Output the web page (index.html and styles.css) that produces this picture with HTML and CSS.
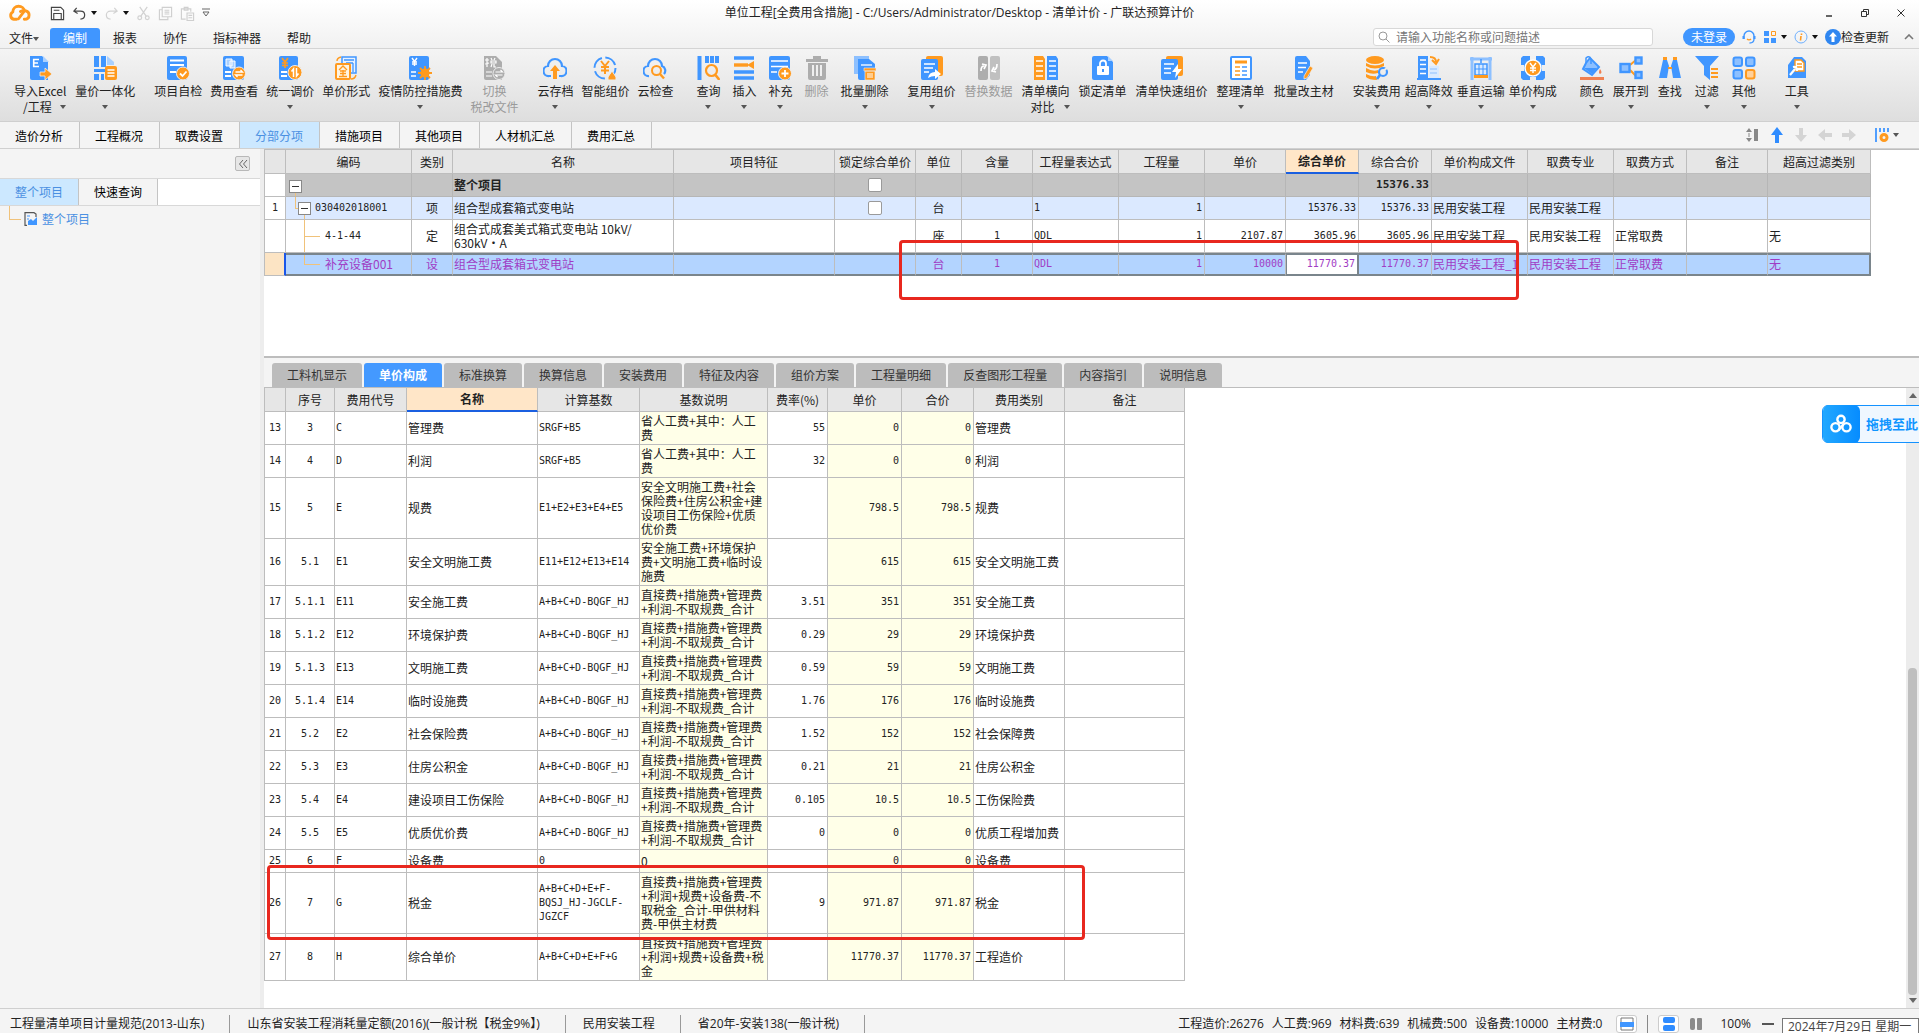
FILE: index.html
```html
<!DOCTYPE html>
<html lang="zh-CN">
<head>
    <meta charset="UTF-8" />
    <meta name="viewport" content="width=device-width, initial-scale=1.0" />
    <title>广联达预算计价</title>
    <link rel="stylesheet" href="styles.css">
</head>
<body>
<div class="app">

    <!-- Title bar + menu -->
    <header class="titlebar">
        <div class="title-row">
            <div class="quick">
                <svg class="logo" viewBox="0 0 24 18"><g fill="none" stroke="#ff9a1f" stroke-width="3" stroke-linecap="round" stroke-linejoin="round"><path d="M9 15.500H6A4 4 0 0 1 5 8C5 4 8 2 11 2s6 2 6 5l-6 8"/><path d="M13 7.500c3-2 9-1 9 3.500 0 3-2 4.500-5 4.500"/></g></svg>
                <button class="qbtn" aria-label="保存"><svg viewBox="0 0 16 16" fill="none" stroke="#444" stroke-width="1.200"><path d="M1.500 1.500h10l3 3v10h-13zM4 14V8h8v6M4 4.500h6"/></svg></button>
                <button class="qbtn" aria-label="撤销"><svg viewBox="0 0 16 16" fill="none" stroke="#444" stroke-width="1.300"><path d="M5 2L2 5.500 6 8M2.500 5.500H9c6 0 6 8 0 8.500"/></svg></button>
                <i class="caret dark"></i>
                <button class="qbtn" aria-label="重做"><svg viewBox="0 0 16 16" fill="none" stroke="#d2d2d2" stroke-width="1.300"><path d="M11 2l3 3.500L10 8M13.500 5.500H7c-6 0-6 8 0 8.500"/></svg></button>
                <i class="caret dark"></i>
                <button class="qbtn" aria-label="剪切"><svg viewBox="0 0 16 16" fill="none" stroke="#d2d2d2" stroke-width="1.300"><path d="M4 1l7 10M12 1L5 11"/><circle cx="4" cy="12.500" r="2"/><circle cx="12" cy="12.500" r="2"/></svg></button>
                <button class="qbtn" aria-label="复制"><svg viewBox="0 0 16 16" fill="none" stroke="#cfcfcf" stroke-width="1.200"><path d="M4.500 1.500h10v10h-10zM4 4H1.500v10.500h9V12M7 4.500h5M7 6.500h5M7 8.500h5"/></svg></button>
                <button class="qbtn" aria-label="粘贴"><svg viewBox="0 0 16 16" fill="none" stroke="#cfcfcf" stroke-width="1.200"><path d="M6 14H1.500V3h10v3M4.500 1.500h4v3h-4zM7.500 7.500h7v8h-7zM9 10h4M9 12.500h4"/></svg></button>
                <button class="qbtn small" aria-label="自定义"><svg viewBox="0 0 8 10"><path d="M0 1h8" stroke="#666"/><path d="M1 4h6L4 8z" fill="none" stroke="#666"/></svg></button>
            </div>
            <div class="title">单位工程[全费用含措施] - C:/Users/Administrator/Desktop - 清单计价 - 广联达预算计价</div>
            <div class="window-controls">
                <button aria-label="最小化"><svg viewBox="0 0 10 10"><path d="M2 8h6" stroke="#333" stroke-width="1.500"/></svg></button>
                <button aria-label="还原"><svg viewBox="0 0 10 10" fill="none" stroke="#333"><path d="M1.500 3.500h5v5h-5zM3.500 3V1.500h5v5H7"/></svg></button>
                <button aria-label="关闭"><svg viewBox="0 0 10 10"><path d="M1.500 1.500l7 7M8.500 1.500l-7 7" stroke="#333"/></svg></button>
            </div>
        </div>
        <div class="menu-row">
            <nav class="menu">
                <button>文件<i class="caret"></i></button>
                <button class="active">编制</button>
                <button>报表</button>
                <button>协作</button>
                <button>指标神器</button>
                <button>帮助</button>
            </nav>
            <div class="menu-right">
                <label class="search">
                    <svg viewBox="0 0 12 12" fill="none" stroke="#999"><circle cx="5" cy="5" r="4"/><path d="M8 8l3.500 3.500"/></svg>
                    <input type="text" placeholder="请输入功能名称或问题描述" aria-label="搜索功能">
                </label>
                <button class="login">未登录</button>
                <button class="mini" aria-label="客服"><svg viewBox="0 0 14 14" fill="none"><path d="M2 9V6a5 5 0 0 1 10 0v3" stroke="#4096ff" stroke-width="1.400"/><path d="M1.500 6v3M12.500 6v3" stroke="#4096ff" stroke-width="2"/><path d="M12 9c0 3-2 4-4.500 4" stroke="#4096ff" stroke-width="1.300"/><path d="M5 9c1 1 3 1 4 0" stroke="#ff9a1f" stroke-width="1.300"/></svg></button>
                <button class="mini" aria-label="应用"><svg viewBox="0 0 14 14"><path fill="#4096ff" d="M1 1h5v5H1zM1 8h5v5H1zM8 8h5v5H8z"/><path fill="none" stroke="#ff9a1f" d="M8.500 1.500h4v4h-4z"/></svg><i class="caret dark"></i></button>
                <button class="mini" aria-label="信息"><svg viewBox="0 0 14 14" fill="none"><circle cx="7" cy="7" r="6" stroke="#6eb0ff"/><path d="M7.500 3.500v1.500M7 6l-.5 4.500" stroke="#ff9a1f" stroke-width="1.600"/></svg><i class="caret dark"></i></button>
                <button class="update"><svg viewBox="0 0 16 16"><circle cx="8" cy="8" r="8" fill="#2f86f0"/><path d="M8 3l4 4.500H9.500V13h-3V7.500H4z" fill="#fff"/></svg>检查更新</button>
                <button class="fold" aria-label="收起"><svg viewBox="0 0 10 6"><path d="M1 5l4-4 4 4" fill="none" stroke="#777" stroke-width="1.600"/></svg></button>
            </div>
        </div>
    </header>

    <!-- Ribbon -->
    <div class="ribbon">
        <div class="group gap-m">
            <button class="tool">
                <svg viewBox="0 0 24 24"><path d="M2 0h12l6 6v18H4a2 2 0 0 1-2-2z" fill="#4096ff"/><path d="M15 0l6 6h-6z" fill="#a9d0ff"/><path d="M5 3.500h6M5 7h5M5 10.500h6M5.700 3v8" stroke="#fff" stroke-width="1.600"/><path d="M12 16h5v-4l7 6-7 6v-4h-5z" fill="#ff9a1f" stroke="#eee" stroke-width=".8"/></svg>
                <span>导入Excel</span><span class="second">/工程<i class="caret"></i></span>
            </button>
            <button class="tool">
                <svg viewBox="0 0 24 24"><path d="M1 0h5v11H1zM1 18h5v6H1zM8 0h5v11H8zM8 18h3v6H8z" fill="#4096ff"/><path d="M14 0l7 6v3h-7z" fill="#a9d0ff"/><path d="M1 14.500h12" stroke="#4096ff" stroke-width="3"/><rect x="12" y="10" width="12" height="14" rx="2" fill="#ff9a1f"/><path d="M14.500 14h7M14.500 17h7M14.500 20h7" stroke="#fff" stroke-width="1.300"/></svg>
                <span>量价一体化</span><span><i class="caret"></i></span>
            </button>
        </div>
        <div class="group gap-s">
            <button class="tool">
                <svg viewBox="0 0 24 24"><rect x="1" width="20" height="24" rx="2" fill="#4096ff"/><path d="M4 4.500h14M4 9h14M4 16h6" stroke="#fff" stroke-width="1.800"/><circle cx="17" cy="17.500" r="6.500" fill="#ff9a1f" stroke="#eee"/><path d="M14 17.500l2.500 2.500 4-4.500" fill="none" stroke="#fff" stroke-width="1.800"/></svg>
                <span>项目自检</span>
            </button>
            <button class="tool">
                <svg viewBox="0 0 24 24"><rect x="1" width="21" height="24" rx="2" fill="#4096ff"/><path d="M4 3h6v7H4zM8 5h5v7H8z" fill="#a9d0ff" stroke="#fff"/><path d="M3 16h6M3 20h6" stroke="#fff" stroke-width="1.800"/><circle cx="17" cy="17.500" r="6.500" fill="#ff9a1f" stroke="#eee"/><path d="M13.500 16h7l-2-2M20.500 19h-7l2 2" fill="none" stroke="#fff" stroke-width="1.300"/></svg>
                <span>费用查看</span>
            </button>
            <button class="tool">
                <svg viewBox="0 0 24 24"><rect x="1" width="19" height="24" rx="2" fill="#4096ff"/><path d="M4 2l3 4 3-4M7 6v6M4 7h6M4 9.500h6" fill="none" stroke="#ff9a1f" stroke-width="1.700"/><path d="M3 16h6M3 20h6" stroke="#fff" stroke-width="1.800"/><circle cx="17" cy="16.500" r="7" fill="#ff9a1f" stroke="#eee"/><path d="M15.500 21v-8l-2 2.500M18.500 12v8l2-2.500" fill="none" stroke="#fff" stroke-width="1.500"/></svg>
                <span>统一调价</span><span><i class="caret"></i></span>
            </button>
            <button class="tool">
                <svg viewBox="0 0 24 24"><rect x="8" y="1" width="14" height="16" fill="#e8f2ff" stroke="#4096ff" stroke-width="1.500"/><path d="M10 4h10M12 7h7M19 7v9" stroke="#4096ff" stroke-width="1.300"/><path d="M3 5q0-3 4-4M17 23q4 0 5-4" fill="none" stroke="#ff9a1f" stroke-width="1.400"/><rect x="2" y="8" width="14" height="15" rx="1" fill="#fff4e0" stroke="#ff9a1f" stroke-width="2"/><path d="M5 14l4-4 4 4M6 15h6M6 17.500h6M5 20.500h8M9 14v6" fill="none" stroke="#ff9a1f" stroke-width="1.300"/></svg>
                <span>单价形式</span>
            </button>
            <button class="tool">
                <svg viewBox="0 0 24 24"><rect x="1" width="20" height="24" rx="2" fill="#4096ff"/><path d="M4 2l2.500 3.500L9 2M6.500 5.500V10M4 6h5M4 8h5M3 16h5M3 20h5" fill="none" stroke="#fff" stroke-width="1.400"/><path d="M17 10v14M10 17h14M12 12l10 10M22 12L12 22" stroke="#ff9a1f" stroke-width="1.800"/><circle cx="17" cy="17" r="4.500" fill="#ff9a1f"/></svg>
                <span>疫情防控措施费</span><span><i class="caret"></i></span>
            </button>
            <button class="tool" disabled>
                <svg viewBox="0 0 24 24"><path d="M2 0h12l6 6v18H4a2 2 0 0 1-2-2z" fill="#adadad"/><path d="M3 4h4M5 2v9M3 8l4-1M9 2l1 2M13 2l-1 2M9 5h5v2H9zM10 8l-1 3M12 8v3h2M4 16h6M4 20h6" fill="none" stroke="#fff" stroke-width="1.200"/><circle cx="17" cy="17.500" r="6" fill="#adadad" stroke="#eee"/><path d="M13.500 16h7l-2-2M20.500 19h-7l2 2" fill="none" stroke="#fff" stroke-width="1.200"/></svg>
                <span>切换</span><span>税改文件</span>
            </button>
        </div>
        <div class="group gap-s">
            <button class="tool">
                <svg viewBox="0 0 24 24" fill="none"><path d="M8 20H6a5 5 0 0 1-1-10 7 7 0 0 1 14 0 5 5 0 0 1-1 10h-2" stroke="#4096ff" stroke-width="2.200"/><path d="M12 9l5 6h-3v8h-4v-8H7z" fill="#ff9a1f"/></svg>
                <span>云存档</span><span><i class="caret"></i></span>
            </button>
            <button class="tool">
                <svg viewBox="0 0 24 24" fill="none"><circle cx="12" cy="12" r="10.500" stroke="#4096ff" stroke-width="2" stroke-dasharray="13 3.500"/><path d="M8 5l4 5 4-5M12 10v8M8 11h8M8 14.500h8" stroke="#ff9a1f" stroke-width="2"/><path d="M15 24v-3l4-6 4 6v3z" fill="#ff9a1f" stroke="#eee"/></svg>
                <span>智能组价</span>
            </button>
            <button class="tool">
                <svg viewBox="0 0 24 24" fill="none"><path d="M6 20a5 5 0 0 1-1-10 7 7 0 0 1 14 0 5 5 0 0 1 2 8" stroke="#4096ff" stroke-width="2.200"/><circle cx="13.500" cy="14.500" r="4.500" stroke="#ff9a1f" stroke-width="2"/><path d="M17 18l4 4.500" stroke="#ff9a1f" stroke-width="2.400"/></svg>
                <span>云检查</span>
            </button>
        </div>
        <div class="group gap-l wide">
            <button class="tool">
                <svg viewBox="0 0 24 24" fill="none"><path d="M3.500 0v24M11 0v7M16 0v7M21 0v7" stroke="#4096ff" stroke-width="4"/><circle cx="15.500" cy="14.500" r="5.500" stroke="#ff9a1f" stroke-width="2.200"/><path d="M19.500 19l4 5" stroke="#ff9a1f" stroke-width="2.600"/></svg>
                <span>查询</span><span><i class="caret"></i></span>
            </button>
            <button class="tool">
                <svg viewBox="0 0 24 24" fill="none"><path d="M2 2h20M2 16h20M2 22h20" stroke="#4096ff" stroke-width="3.600"/><path d="M2 9h14" stroke="#ff9a1f" stroke-width="3.400"/><path d="M15 9l7-4v8z" fill="#ff9a1f"/></svg>
                <span>插入</span><span><i class="caret"></i></span>
            </button>
            <button class="tool">
                <svg viewBox="0 0 24 24"><rect x="1" width="21" height="24" rx="2" fill="#4096ff"/><path d="M3 5h17M3 10.500h17M3 16h6" stroke="#fff" stroke-width="1.600"/><circle cx="17" cy="17.500" r="6.500" fill="#ff9a1f" stroke="#eee"/><path d="M17 14v7M13.500 17.500h7" stroke="#fff" stroke-width="1.800"/></svg>
                <span>补充</span><span><i class="caret"></i></span>
            </button>
            <button class="tool" disabled>
                <svg viewBox="0 0 24 24"><path d="M1 3h22v3H1zM8 0h8v3H8zM3 7h18v15a2 2 0 0 1-2 2H5a2 2 0 0 1-2-2z" fill="#adadad"/><path d="M8 9v11M12 9v11M16 9v11" stroke="#fff" stroke-width="1.600"/></svg>
                <span>删除</span>
            </button>
            <button class="tool">
                <svg viewBox="0 0 24 24"><path d="M1 0h15v18H1z" fill="#8dc0ff"/><path d="M5 3h11l6 5v16H7a2 2 0 0 1-2-2z" fill="#4096ff"/><path d="M8 9h11" stroke="#fff" stroke-width="1.300"/><path d="M11 12h12v3H11zM12 15h10v9H12z" fill="#ff9a1f" stroke="#eee" stroke-width=".6"/><path d="M15 17v5M17 17v5M19 17v5" stroke="#fff"/></svg>
                <span>批量删除</span><span><i class="caret"></i></span>
            </button>
        </div>
        <div class="group gap-m">
            <button class="tool">
                <svg viewBox="0 0 24 24"><rect x="6" width="17" height="20" rx="2" fill="#ff9a1f"/><rect x="1" y="3" width="17" height="21" rx="2" fill="#4096ff"/><path d="M4 8h11M4 12h9M4 16h5" stroke="#fff" stroke-width="1.600"/><path d="M8 22q1-6 7-6v-3l6 5-6 5v-3q-4 0-7 2z" fill="#fff"/></svg>
                <span>复用组价</span><span><i class="caret"></i></span>
            </button>
            <button class="tool" disabled>
                <svg viewBox="0 0 24 24"><rect x="1" width="10" height="24" rx="2" fill="#adadad"/><rect x="13" width="10" height="24" rx="2" fill="#c0c0c0"/><path d="M4 15q0-5 3-5M5 8l4 1-2 4M20 8q0 5-3 6M19 16l-4-1 2-4" fill="none" stroke="#fff" stroke-width="1.700"/></svg>
                <span>替换数据</span>
            </button>
            <button class="tool">
                <svg viewBox="0 0 24 24"><path d="M0 0h9l2 3v21H0z" fill="#ff9a1f"/><path d="M13 0h9l2 3v21H13z" fill="#4096ff"/><path d="M2 5h7M2 10h7M2 15h7M2 20h7M15 5h7M15 10h7M15 15h7M15 20h7" stroke="#fff" stroke-width="1.500"/></svg>
                <span>清单横向</span><span class="second">对比<i class="caret"></i></span>
            </button>
            <button class="tool">
                <svg viewBox="0 0 24 24"><path d="M3 0h13l6 6v18H3a2 2 0 0 1-2-2V2a2 2 0 0 1 2-2z" fill="#4096ff"/><path d="M17 0l5 5h-5z" fill="#a9d0ff"/><rect x="6" y="10" width="12" height="9" rx="1" fill="#fff"/><path d="M9 10V7.500a3 3 0 0 1 6 0V10" fill="none" stroke="#fff" stroke-width="1.800"/><path d="M12 13v3" stroke="#4096ff" stroke-width="2"/></svg>
                <span>锁定清单</span>
            </button>
            <button class="tool">
                <svg viewBox="0 0 24 24"><rect x="6" width="17" height="20" rx="2" fill="#ff9a1f"/><rect x="1" y="3" width="17" height="21" rx="2" fill="#4096ff"/><path d="M4 8h10M4 12.500h7M4 17h7" stroke="#fff" stroke-width="1.600"/><path d="M18 8l-6 8h4l-1 6 7-9h-4z" fill="#fff"/></svg>
                <span>清单快速组价</span>
            </button>
            <button class="tool">
                <svg viewBox="0 0 24 24"><rect x="2" y="1" width="20" height="22" rx="1" fill="#fff" stroke="#4096ff" stroke-width="2"/><path d="M6 6h12" stroke="#ff9a1f" stroke-width="3"/><path d="M6 11h5M6 15h5M6 19h5" stroke="#ff9a1f" stroke-width="1.700"/><path d="M13 11h5M13 15h5M13 19h5" stroke="#4096ff" stroke-width="1.700"/></svg>
                <span>整理清单</span><span><i class="caret"></i></span>
            </button>
            <button class="tool">
                <svg viewBox="0 0 24 24"><path d="M5 0h9l4 5v14l-4 5H5a2 2 0 0 1-2-2V2a2 2 0 0 1 2-2z" fill="#4096ff"/><path d="M6 7h9M6 11.500h8M6 16h5" stroke="#fff" stroke-width="1.600"/><path d="M18 10l3 2-6 10-3 1v-3z" fill="#ff9a1f" stroke="#eee" stroke-width=".7"/></svg>
                <span>批量改主材</span>
            </button>
        </div>
        <div class="group gap-xs">
            <button class="tool">
                <svg viewBox="0 0 24 24"><g fill="#ff9a1f"><ellipse cx="10" cy="4" rx="9" ry="4"/><path d="M1 7q9 5 18 0v3q-9 5-18 0zM1 12q7 4 12 2v3q-6 2-12-1zM1 18q6 3 10 2l1 4Q4 24 1 21z"/></g><circle cx="18" cy="16" r="4" fill="none" stroke="#4096ff" stroke-width="2.200"/><path d="M15 19l-3 4" stroke="#4096ff" stroke-width="2.600"/><path d="M18 15l4-3" stroke="#eee" stroke-width="2"/></svg>
                <span>安装费用</span><span><i class="caret"></i></span>
            </button>
            <button class="tool">
                <svg viewBox="0 0 24 24"><path d="M1 0h10v24H1z" fill="#4096ff"/><path d="M3 4h6M3 8.500h6M3 13h6M3 17.500h6" stroke="#fff" stroke-width="1.600"/><path d="M12 10h10v13H12z" fill="#d9eaff"/><path d="M13 13h7M13 17h7" stroke="#8dc0ff"/><path d="M0 23h24" stroke="#4096ff" stroke-width="2"/><path d="M13 1q6 0 6 5M15 4l4 4 3-5" fill="none" stroke="#ff9a1f" stroke-width="2"/></svg>
                <span>超高降效</span><span><i class="caret"></i></span>
            </button>
            <button class="tool">
                <svg viewBox="0 0 24 24"><path d="M3 1v23M21 1v23M1 3h22" stroke="#8dc0ff" stroke-width="3"/><path d="M12 3v4M6 8h12v11H6z" fill="#d9eaff" stroke="#4096ff" stroke-width="1.500"/><path d="M10 8v11M14 8v11M6 13h12" stroke="#4096ff"/><path d="M5 19h14v3H5z" fill="#ff9a1f"/></svg>
                <span>垂直运输</span><span><i class="caret"></i></span>
            </button>
            <button class="tool">
                <svg viewBox="0 0 24 24"><path d="M2 0h7v4h6V0h7l2 2v7h-3v6h3v7l-2 2h-7v-3H9v3H2l-2-2v-7h3V9H0V2z" fill="#4096ff"/><circle cx="12" cy="12" r="8" fill="#ff9a1f" stroke="#fff" stroke-width="1.500"/><path d="M9 7l3 4 3-4M12 11v6M9 12h6M9 14.500h6" fill="none" stroke="#fff" stroke-width="1.400"/></svg>
                <span>单价构成</span><span><i class="caret"></i></span>
            </button>
        </div>
        <div class="group gap-m wide">
            <button class="tool">
                <svg viewBox="0 0 24 24"><path d="M6 7l4-5 9 9-7 8-9-6z" fill="#8dc0ff" stroke="#4096ff" stroke-width="2"/><path d="M4 12h13l-5 6z" fill="#4096ff"/><path d="M6 7V2q3-3 5 1v5" fill="none" stroke="#4096ff" stroke-width="1.500"/><path d="M20 13q3 4 0 5-2-1 0-5zM0 21h24v3H0z" fill="#f08050"/></svg>
                <span>颜色</span><span><i class="caret"></i></span>
            </button>
            <button class="tool">
                <svg viewBox="0 0 24 24"><path d="M11 9l6-5M11 14l6 6" stroke="#ff9a1f" stroke-width="2"/><g fill="#8dc0ff" stroke="#4096ff" stroke-width="2.400"><rect x="1.500" y="8" width="9" height="8"/><rect x="16.500" y="1.500" width="6" height="6"/><rect x="16.500" y="16" width="6" height="6"/></g></svg>
                <span>展开到</span><span><i class="caret"></i></span>
            </button>
            <button class="tool">
                <svg viewBox="0 0 24 24"><path d="M5 4h4l2 6-2 12H1zM15 4h4l4 18h-8l-2-12z" fill="#4096ff"/><path d="M5 1h4v3H5zM15 1h4v3h-4zM10 11h4v2h-4z" fill="#ff9a1f"/></svg>
                <span>查找</span>
            </button>
            <button class="tool spaced">
                <svg viewBox="0 0 24 24"><path d="M0 0h24l-9 10v14l-6-5v-9z" fill="#4096ff"/><path d="M16 13h7M16 17h7M16 21h7" stroke="#ff9a1f" stroke-width="2"/></svg>
                <span>过滤</span><span><i class="caret"></i></span>
            </button>
            <button class="tool spaced">
                <svg viewBox="0 0 24 24" fill="#8dc0ff" stroke="#4096ff" stroke-width="2"><rect x="1.500" y="1.500" width="8.500" height="8.500" rx="2"/><rect x="14" y="1.500" width="8.500" height="8.500" rx="2"/><rect x="1.500" y="14" width="8.500" height="8.500" rx="2"/><rect x="14" y="14" width="8.500" height="8.500" rx="2" fill="#ffd09a" stroke="#ff9a1f"/></svg>
                <span>其他</span><span><i class="caret"></i></span>
            </button>
        </div>
        <div class="group far">
            <button class="tool">
                <svg viewBox="0 0 24 24"><path d="M9 1h8l4 4v17H3V9z" fill="#4096ff"/><path d="M10 4h6l3 3v8h-9z" fill="#fff" stroke="#ff9a1f" stroke-width="1.400"/><path d="M12 8h5M12 11h5" stroke="#ff9a1f" stroke-width="1.300"/><path d="M5 19l5-6M8 11q4-1 4 4" fill="none" stroke="#fff" stroke-width="2.200"/></svg>
                <span>工具</span><span><i class="caret"></i></span>
            </button>
        </div>
    </div>

    <!-- Module tabs -->
    <div class="module-bar">
        <nav class="module-tabs">
            <button>造价分析</button>
            <button>工程概况</button>
            <button>取费设置</button>
            <button class="active">分部分项</button>
            <button>措施项目</button>
            <button>其他项目</button>
            <button>人材机汇总</button>
            <button>费用汇总</button>
        </nav>
        <div class="module-actions">
            <button aria-label="行高"><svg viewBox="0 0 16 16"><path d="M1 5l3-4 3 4zM1 11l3 4 3-4z" fill="#888"/><path d="M4 6v4" stroke="#888"/><path d="M9 2h4v12H9z" fill="#888"/></svg></button>
            <button aria-label="上移"><svg viewBox="0 0 16 16"><path d="M8 0l6 8h-4v8H6V8H2z" fill="#2f8cff"/></svg></button>
            <button aria-label="下移"><svg viewBox="0 0 16 16"><path d="M8 15l6-7h-4V1H6v7H2z" fill="#d4d4d4"/></svg></button>
            <button aria-label="左移"><svg viewBox="0 0 16 16"><path d="M1 8l7-6v4h7v4H8v4z" fill="#d4d4d4"/></svg></button>
            <button aria-label="右移"><svg viewBox="0 0 16 16"><path d="M15 8L8 2v4H1v4h7v4z" fill="#d4d4d4"/></svg></button>
            <button class="setting" aria-label="列设置"><svg viewBox="0 0 16 16"><path d="M2 1v14M6 1v4M10 1v4M14 1v4" stroke="#4096ff" stroke-width="1.800"/><circle cx="10" cy="10.500" r="3" fill="none" stroke="#ff9a1f" stroke-width="3"/></svg><i class="caret"></i></button>
        </div>
    </div>

    <div class="workspace">
        <!-- Project tree -->
        <aside class="sidebar">
            <div class="side-head"><button class="collapse" aria-label="折叠"><svg viewBox="0 0 10 10"><path d="M5 1L1.500 5 5 9M9 1L5.500 5 9 9" fill="none" stroke="#666"/></svg></button></div>
            <div class="side-tabs">
                <button class="active">整个项目</button>
                <button>快速查询</button>
            </div>
            <div class="tree">
                <a href="#project" class="tree-node">
                    <svg viewBox="0 0 14 14" fill="none"><path d="M12 5V2L10 .7H1v12.600h2" stroke="#555" stroke-width="1.200"/><path d="M3 4h3M3 7h2" stroke="#4096ff"/><path d="M4 13V9l3-2 2 2 4-4v8z" fill="#4096ff"/></svg>
                    整个项目
                </a>
            </div>
        </aside>

        <main class="content">
            <!-- Bill of quantities -->
            <section class="bill-pane">
                <table class="grid bill">
                    <colgroup>
                        <col class="w-no"><col class="w-code"><col class="w-kind"><col class="w-name"><col class="w-feature"><col class="w-lock"><col class="w-unit"><col class="w-content"><col class="w-expr"><col class="w-qty"><col class="w-price"><col class="w-total"><col class="w-total"><col class="w-file"><col class="w-major"><col class="w-mode"><col class="w-note"><col class="w-filter">
                    </colgroup>
                    <thead>
                        <tr><th></th><th>编码</th><th>类别</th><th>名称</th><th>项目特征</th><th>锁定综合单价</th><th>单位</th><th>含量</th><th>工程量表达式</th><th>工程量</th><th>单价</th><th class="current">综合单价</th><th>综合合价</th><th>单价构成文件</th><th>取费专业</th><th>取费方式</th><th>备注</th><th>超高过滤类别</th></tr>
                    </thead>
                    <tbody>
                        <tr class="total">
                            <td class="no"></td><td class="lv0"><button class="toggle" aria-label="折叠"></button></td><td></td><td>整个项目</td><td></td><td class="c"><input type="checkbox" aria-label="锁定综合单价"></td><td></td><td></td><td></td><td></td><td></td><td></td><td class="num">15376.33</td><td></td><td></td><td></td><td></td><td></td>
                        </tr>
                        <tr class="item">
                            <td class="no">1</td><td class="lv1 mono"><button class="toggle" aria-label="折叠"></button>030402018001</td><td class="c">项</td><td>组合型成套箱式变电站</td><td></td><td class="c"><input type="checkbox" aria-label="锁定综合单价"></td><td class="c">台</td><td></td><td class="mono">1</td><td class="num">1</td><td></td><td class="num">15376.33</td><td class="num">15376.33</td><td>民用安装工程</td><td>民用安装工程</td><td></td><td></td><td></td>
                        </tr>
                        <tr>
                            <td class="no"></td><td class="lv2 mono">4-1-44</td><td class="c">定</td><td>组合式成套美式箱式变电站 10kV/<br>630kV·A</td><td></td><td></td><td class="c">座</td><td class="mono c">1</td><td class="mono">QDL</td><td class="num">1</td><td class="num">2107.87</td><td class="num">3605.96</td><td class="num">3605.96</td><td>民用安装工程</td><td>民用安装工程</td><td>正常取费</td><td></td><td>无</td>
                        </tr>
                        <tr class="selected">
                            <td class="no"></td><td class="lv2 last">补充设备001</td><td class="c">设</td><td>组合型成套箱式变电站</td><td></td><td></td><td class="c">台</td><td class="mono c">1</td><td class="mono">QDL</td><td class="num">1</td><td class="num">10000</td><td class="num editing">11770.37</td><td class="num">11770.37</td><td>民用安装工程_1</td><td>民用安装工程</td><td>正常取费</td><td></td><td>无</td>
                        </tr>
                    </tbody>
                </table>
                <div class="mark mark-price"></div>
            </section>

            <!-- Detail tabs -->
            <nav class="detail-tabs">
                <button>工料机显示</button>
                <button class="active">单价构成</button>
                <button>标准换算</button>
                <button>换算信息</button>
                <button>安装费用</button>
                <button>特征及内容</button>
                <button>组价方案</button>
                <button>工程量明细</button>
                <button>反查图形工程量</button>
                <button>内容指引</button>
                <button>说明信息</button>
            </nav>

            <section class="detail-pane">
                <div class="detail-body">
                    <table class="grid detail">
                        <colgroup>
                            <col class="w-no"><col class="w-seq"><col class="w-sym"><col class="w-fee"><col class="w-base"><col class="w-desc"><col class="w-rate"><col class="w-unitprice"><col class="w-sum"><col class="w-type"><col class="w-remark">
                        </colgroup>
                        <thead>
                            <tr><th></th><th>序号</th><th>费用代号</th><th class="current">名称</th><th>计算基数</th><th>基数说明</th><th>费率(%)</th><th>单价</th><th>合价</th><th>费用类别</th><th>备注</th></tr>
                        </thead>
                        <tbody>
                            <tr><td>13</td><td>3</td><td>C</td><td>管理费</td><td>SRGF+B5</td><td>省人工费+其中：人工费</td><td>55</td><td>0</td><td>0</td><td>管理费</td><td></td></tr>
                            <tr><td>14</td><td>4</td><td>D</td><td>利润</td><td>SRGF+B5</td><td>省人工费+其中：人工费</td><td>32</td><td>0</td><td>0</td><td>利润</td><td></td></tr>
                            <tr><td>15</td><td>5</td><td>E</td><td>规费</td><td>E1+E2+E3+E4+E5</td><td>安全文明施工费+社会保险费+住房公积金+建设项目工伤保险+优质优价费</td><td></td><td>798.5</td><td>798.5</td><td>规费</td><td></td></tr>
                            <tr><td>16</td><td>5.1</td><td>E1</td><td>安全文明施工费</td><td>E11+E12+E13+E14</td><td>安全施工费+环境保护费+文明施工费+临时设施费</td><td></td><td>615</td><td>615</td><td>安全文明施工费</td><td></td></tr>
                            <tr><td>17</td><td>5.1.1</td><td>E11</td><td>安全施工费</td><td>A+B+C+D-BQGF_HJ</td><td>直接费+措施费+管理费+利润-不取规费_合计</td><td>3.51</td><td>351</td><td>351</td><td>安全施工费</td><td></td></tr>
                            <tr><td>18</td><td>5.1.2</td><td>E12</td><td>环境保护费</td><td>A+B+C+D-BQGF_HJ</td><td>直接费+措施费+管理费+利润-不取规费_合计</td><td>0.29</td><td>29</td><td>29</td><td>环境保护费</td><td></td></tr>
                            <tr><td>19</td><td>5.1.3</td><td>E13</td><td>文明施工费</td><td>A+B+C+D-BQGF_HJ</td><td>直接费+措施费+管理费+利润-不取规费_合计</td><td>0.59</td><td>59</td><td>59</td><td>文明施工费</td><td></td></tr>
                            <tr><td>20</td><td>5.1.4</td><td>E14</td><td>临时设施费</td><td>A+B+C+D-BQGF_HJ</td><td>直接费+措施费+管理费+利润-不取规费_合计</td><td>1.76</td><td>176</td><td>176</td><td>临时设施费</td><td></td></tr>
                            <tr><td>21</td><td>5.2</td><td>E2</td><td>社会保险费</td><td>A+B+C+D-BQGF_HJ</td><td>直接费+措施费+管理费+利润-不取规费_合计</td><td>1.52</td><td>152</td><td>152</td><td>社会保障费</td><td></td></tr>
                            <tr><td>22</td><td>5.3</td><td>E3</td><td>住房公积金</td><td>A+B+C+D-BQGF_HJ</td><td>直接费+措施费+管理费+利润-不取规费_合计</td><td>0.21</td><td>21</td><td>21</td><td>住房公积金</td><td></td></tr>
                            <tr><td>23</td><td>5.4</td><td>E4</td><td>建设项目工伤保险</td><td>A+B+C+D-BQGF_HJ</td><td>直接费+措施费+管理费+利润-不取规费_合计</td><td>0.105</td><td>10.5</td><td>10.5</td><td>工伤保险费</td><td></td></tr>
                            <tr><td>24</td><td>5.5</td><td>E5</td><td>优质优价费</td><td>A+B+C+D-BQGF_HJ</td><td>直接费+措施费+管理费+利润-不取规费_合计</td><td>0</td><td>0</td><td>0</td><td>优质工程增加费</td><td></td></tr>
                            <tr><td>25</td><td>6</td><td>F</td><td>设备费</td><td>0</td><td>0</td><td></td><td>0</td><td>0</td><td>设备费</td><td></td></tr>
                            <tr><td>26</td><td>7</td><td>G</td><td>税金</td><td>A+B+C+D+E+F-BQSJ_HJ-JGCLF-JGZCF</td><td>直接费+措施费+管理费+利润+规费+设备费-不取税金_合计-甲供材料费-甲供主材费</td><td>9</td><td>971.87</td><td>971.87</td><td>税金</td><td></td></tr>
                            <tr><td>27</td><td>8</td><td>H</td><td>综合单价</td><td>A+B+C+D+E+F+G</td><td>直接费+措施费+管理费+利润+规费+设备费+税金</td><td></td><td>11770.37</td><td>11770.37</td><td>工程造价</td><td></td></tr>
                        </tbody>
                    </table>
                </div>
                <div class="scrollbar"><i class="arrow up"></i><div class="track"><div class="thumb"></div></div><i class="arrow"></i></div>
                <div class="mark mark-tax"></div>
                <button class="cloud-drop">
                    <span class="cloud-icon"><svg viewBox="0 0 24 24" fill="none" stroke="#fff" stroke-width="2.600"><circle cx="12" cy="7" r="4"/><circle cx="6" cy="15.500" r="4.500"/><circle cx="18" cy="15.500" r="4.500"/><path d="M9 19l6-7"/></svg></span>
                    <span class="cloud-text">拖拽至此</span>
                </button>
            </section>
        </main>
    </div>

    <!-- Status bar -->
    <footer class="status">
        <span class="cell">工程量清单项目计量规范(2013-山东)</span>
        <span class="cell">山东省安装工程消耗量定额(2016)(一般计税【税金9%】)</span>
        <span class="cell">民用安装工程</span>
        <span class="cell">省20年-安装138(一般计税)</span>
        <div class="summary"><span>工程造价:26276</span><span>人工费:969</span><span>材料费:639</span><span>机械费:500</span><span>设备费:10000</span><span>主材费:0</span></div>
        <button class="view" aria-label="单窗"><svg viewBox="0 0 14 14"><path d="M1 1h12v12H1z" fill="#fff" stroke="#777"/><path d="M0 5h14v5H0z" fill="#4096ff"/></svg></button>
        <i class="sep"></i>
        <button class="view" aria-label="上下布局"><svg viewBox="0 0 14 14" fill="#2f8cff"><rect x="1" width="12" height="6" rx="2"/><rect x="1" y="8" width="12" height="6" rx="2"/></svg></button>
        <button class="view plain" aria-label="左右布局"><svg viewBox="0 0 14 14" fill="#8a8a8a"><rect x="1" y="1" width="5" height="12" rx="2"/><rect x="8" y="1" width="5" height="12" rx="1"/></svg></button>
        <span class="zoom">100%</span>
        <button class="minus" aria-label="缩小"></button>
        <div class="date-tip">2024年7月29日 星期一</div>
    </footer>
</div>
</body>
</html>
```
FILE: styles.css
```css
:root {
    --blue: #4096ff;
    --orange: #ff9a1f;
    --line: #bdbdbd;
    --panel: #f4f4f4;
    --active: #cce8ff;
    --link: #4a90e2;
    --red: #e8281f;
    --tree: #f0c27a;
}

* {
    box-sizing: border-box;
}

body {
    margin: 0;
    font-family: "Noto Sans CJK SC", sans-serif;
    font-size: 12px;
    line-height: 16px;
    color: #222;
    background: #fff;
    overflow: hidden;
}

button {
    font: inherit;
    color: inherit;
    background: none;
    border: none;
    padding: 0;
    white-space: nowrap;
}

svg {
    display: block;
    flex: none;
}

.app {
    display: flex;
    flex-direction: column;
    height: 100vh;
}

.caret {
    display: inline-block;
    border: 3px solid transparent;
    border-top: 4px solid #555;
    border-bottom: 0;
}

.caret.dark {
    border-top-color: #111;
}

/* Title bar */
.titlebar {
    background: linear-gradient(#ffffff, #f1f1f1);
    border-bottom: 1px solid #d4d4d4;
}

.title-row {
    display: grid;
    grid-template-columns: 1fr auto 1fr;
    align-items: center;
    height: 26px;
}

.title,
.status {
    font-family: "Open Sans", "Noto Sans CJK SC", sans-serif;
}

.quick {
    display: flex;
    align-items: center;
    gap: 7px;
    padding-left: 8px;
}

.quick .caret {
    margin-left: -3px;
}

.logo {
    width: 23px;
    height: 18px;
    margin-right: 12px;
}

.qbtn svg {
    width: 15px;
    height: 15px;
}

.qbtn.small svg {
    width: 8px;
    height: 10px;
}

.window-controls {
    display: flex;
    justify-content: flex-end;
    gap: 26px;
    padding-right: 13px;
}

.window-controls svg {
    width: 10px;
    height: 10px;
}

.menu-row {
    display: flex;
    justify-content: space-between;
    height: 22px;
}

.menu {
    display: flex;
    align-items: flex-end;
}

.menu button {
    height: 20px;
    padding: 0 13px;
}

.menu button:first-child {
    width: 50px;
    padding: 0 0 0 9px;
    text-align: left;
}

.menu .caret {
    margin: 0 0 2px 0;
}

.menu .active {
    color: #fff;
    background: var(--blue);
    border-radius: 3px 3px 0 0;
}

.menu-right {
    display: flex;
    align-items: center;
    gap: 7px;
    padding-right: 5px;
}

.search {
    display: flex;
    align-items: center;
    gap: 6px;
    width: 280px;
    height: 18px;
    padding: 0 4px;
    margin-right: 23px;
    background: #fff;
    border: 1px solid #d8d8d8;
    border-radius: 3px;
}

.search svg {
    width: 12px;
    height: 12px;
}

.search input {
    flex: 1;
    min-width: 0;
    padding: 0;
    font: inherit;
    border: none;
    outline: none;
    background: none;
}

.search input::placeholder {
    color: #777;
}

.login {
    height: 18px;
    padding: 0 8px;
    color: #fff;
    background: var(--blue);
    border-radius: 9px;
}

.mini {
    display: flex;
    align-items: center;
    gap: 4px;
}

.mini svg {
    width: 14px;
    height: 14px;
}

.update {
    display: flex;
    align-items: center;
}

.update svg {
    width: 16px;
    height: 16px;
}

.fold {
    margin-left: 8px;
}

.fold svg {
    width: 10px;
    height: 6px;
}

/* Ribbon */
.ribbon {
    display: flex;
    gap: 19px;
    height: 73px;
    padding: 7px 14px 0;
    background: linear-gradient(#f4f4f4, #dedede);
    border-bottom: 1px solid #cfcfcf;
}

.group {
    display: flex;
    align-items: flex-start;
}

.group.wide { margin-left: 4px; }
.group.far { margin-left: 10px; }
.gap-xs { gap: 4px; }
.gap-s { gap: 8px; }
.gap-m { gap: 9px; }
.gap-l { gap: 12px; }

.tool {
    display: flex;
    flex-direction: column;
    align-items: center;
}

.tool.spaced {
    margin-left: 4px;
}

.tool svg {
    width: 24px;
    height: 24px;
    margin-bottom: 3px;
}

.tool span {
    display: flex;
    align-items: center;
    height: 16px;
}

.tool .second {
    width: 100%;
    justify-content: space-between;
    padding-left: 9px;
}

.tool:disabled {
    color: #9a9a9a;
}

/* Module tabs */
.module-bar {
    display: flex;
    justify-content: space-between;
    height: 27px;
    background: var(--panel);
    border-bottom: 1px solid #d0d0d0;
}

.module-tabs {
    display: flex;
}

.module-tabs button {
    padding: 1px 16px 0 15px;
    color: #000;
    border-right: 1px solid #c4c4c4;
}

.module-tabs .active {
    color: var(--link);
    background: var(--active);
}

.module-actions {
    display: flex;
    align-items: center;
    gap: 8px;
    padding-right: 20px;
}

.module-actions svg {
    width: 16px;
    height: 16px;
}

.setting {
    display: flex;
    align-items: center;
    gap: 3px;
    margin-left: 9px;
}

/* Workspace */
.workspace {
    display: flex;
    flex: 1;
    min-height: 0;
}

.sidebar {
    width: 264px;
    flex: none;
    background: var(--panel);
    border-right: 4px solid #ededed;
}

.side-head {
    display: flex;
    justify-content: flex-end;
    padding: 7px 10px;
}

.collapse {
    display: flex;
    align-items: center;
    justify-content: center;
    width: 15px;
    height: 15px;
    background: #e6e6e6;
    border: 1px solid #b8b8b8;
    border-radius: 2px;
}

.collapse svg {
    width: 10px;
    height: 10px;
}

.side-tabs {
    display: flex;
    height: 28px;
    background: #fff;
    border-top: 1px solid #d8d8d8;
    border-bottom: 1px solid #d8d8d8;
}

.side-tabs button {
    padding: 0 15px;
    color: #000;
    background: var(--panel);
    border-right: 1px solid #c4c4c4;
}

.side-tabs .active {
    color: var(--link);
    background: var(--active);
}

.tree {
    padding-left: 24px;
    background:
        linear-gradient(var(--tree), var(--tree)) 9px 0 / 1px 13px no-repeat,
        linear-gradient(var(--tree), var(--tree)) 9px 13px / 12px 1px no-repeat;
}

.tree-node {
    display: flex;
    align-items: center;
    gap: 4px;
    height: 26px;
    color: var(--link);
    text-decoration: none;
}

.tree-node svg {
    width: 14px;
    height: 14px;
}

.content {
    display: flex;
    flex: 1;
    flex-direction: column;
    min-width: 0;
}

/* Data grids */
.grid {
    width: 0;
    table-layout: fixed;
    border-collapse: separate;
    border-spacing: 0;
    border-left: 1px solid var(--line);
    line-height: 14px;
}

.grid th {
    height: 24px;
    padding: 0;
    font-weight: normal;
    white-space: nowrap;
    background: #e6e6e6;
    border-right: 1px solid var(--line);
    border-bottom: 1px solid var(--line);
}

.grid th.current {
    font-weight: bold;
    background: #ffe6c8;
    border-bottom: 2px solid #1a5fe0;
}

.grid td {
    height: 23px;
    padding: 2px 1px;
    border-right: 1px solid var(--line);
    border-bottom: 1px solid var(--line);
    overflow: hidden;
}

.grid .c,
.grid .no {
    text-align: center;
}

.grid .mono,
.grid .num,
.grid .no,
.detail td:nth-child(-n+3),
.detail td:nth-child(5),
.detail td:nth-child(n+7):nth-child(-n+9) {
    font-family: "DejaVu Sans Mono", monospace;
    font-size: 10px;
}

.grid .num,
.detail td:nth-child(n+7):nth-child(-n+9) {
    text-align: right;
    padding-right: 2px;
}

.w-no { width: 21px; }
.w-code { width: 126px; }
.w-kind { width: 41px; }
.w-name { width: 221px; }
.w-feature { width: 161px; }
.w-lock { width: 81px; }
.w-unit { width: 46px; }
.w-content { width: 71px; }
.w-expr { width: 86px; }
.w-qty { width: 86px; }
.w-price { width: 81px; }
.w-total { width: 73px; }
.w-file { width: 96px; }
.w-major { width: 86px; }
.w-mode { width: 73px; }
.w-note { width: 81px; }
.w-filter { width: 103px; }

.w-seq { width: 49px; }
.w-sym { width: 72px; }
.w-fee { width: 131px; }
.w-base { width: 102px; }
.w-desc { width: 128px; }
.w-rate { width: 60px; }
.w-unitprice { width: 74px; }
.w-sum { width: 72px; }
.w-type { width: 91px; }
.w-remark { width: 120px; }

.bill-pane {
    position: relative;
    flex: none;
    height: 209px;
    border-top: 1px solid var(--line);
    border-bottom: 2px solid var(--line);
}

.bill td {
    white-space: nowrap;
}

.toggle {
    display: inline-block;
    width: 13px;
    height: 13px;
    vertical-align: middle;
    background: linear-gradient(#333, #333) center / 7px 1px no-repeat #fff;
    border: 1px solid #888;
}

.bill input {
    display: block;
    width: 14px;
    height: 14px;
    margin: 0 auto;
    appearance: none;
    background: #fff;
    border: 1px solid #9a9a9a;
    border-radius: 2px;
}

.bill .lv0 {
    padding-left: 3px;
    background: linear-gradient(var(--tree), var(--tree)) 9px 17px / 1px 6px no-repeat;
}

.bill .lv1 {
    padding-left: 12px;
    background:
        linear-gradient(var(--tree), var(--tree)) 9px 0 / 1px 11px no-repeat,
        linear-gradient(var(--tree), var(--tree)) 9px 11px / 4px 1px no-repeat,
        linear-gradient(var(--tree), var(--tree)) 18px 17px / 1px 6px no-repeat;
}

.lv1 .toggle {
    margin-right: 4px;
}

.bill .lv2 {
    padding-left: 39px;
    background:
        linear-gradient(var(--tree), var(--tree)) 18px 0 / 1px 100% no-repeat,
        linear-gradient(var(--tree), var(--tree)) 18px 50% / 16px 1px no-repeat;
}

.bill .lv2.last {
    background:
        linear-gradient(var(--tree), var(--tree)) 18px 0 / 1px 50% no-repeat,
        linear-gradient(var(--tree), var(--tree)) 18px 50% / 16px 1px no-repeat;
}

.bill .total td:not(.no) {
    font-weight: bold;
    background-color: #c4c4c4;
    border-color: #b6b6b6;
}

.bill .total .num {
    font-size: 11px;
}

.bill .item td:not(.no) {
    background-color: #dbe9ff;
}

.bill .selected td:not(.no) {
    color: #a03cc4;
    background-color: #b3d4ff;
    padding-top: 0;
    padding-bottom: 2px;
    border-top: 2px solid #7a858c;
    border-bottom: 2px solid #7a858c;
}

.bill .selected .no {
    background: #fce4c4;
    border-right: 2px solid #1a56e8;
}

.bill .selected td:last-child {
    border-right: 2px solid #7a858c;
}

.bill .selected td.editing {
    background: #fff;
    border-right: 2px solid #7a858c;
    border-left: 1px solid #7a858c;
}

/* Red annotation frames over the grids */
.mark {
    position: absolute;
    border: 3px solid var(--red);
    border-radius: 4px;
    pointer-events: none;
}

.mark-price {
    left: 635px;
    top: 90px;
    width: 620px;
    height: 60px;
}

.mark-tax {
    left: 3px;
    top: 477px;
    width: 818px;
    height: 75px;
}

/* Detail tabs */
.detail-tabs {
    display: flex;
    gap: 2px;
    padding: 5px 8px 0;
    background: var(--panel);
    border-bottom: 1px solid var(--line);
}

.detail-tabs button {
    height: 24px;
    padding: 0 15px;
    color: #333;
    background: #bcbcbc;
    border-radius: 3px 3px 0 0;
}

.detail-tabs .active {
    font-weight: bold;
    color: #fff;
    background: #4499ff;
}

.detail-pane {
    position: relative;
    display: flex;
    flex: 1;
    min-height: 0;
    overflow: hidden;
}

.detail-body {
    flex: 1;
    overflow: hidden;
}

.detail td:nth-child(-n+2) {
    text-align: center;
}

.detail td:nth-child(6),
.detail td:nth-child(8),
.detail td:nth-child(9) {
    background: #ffffe8;
}

.scrollbar {
    display: flex;
    flex-direction: column;
    align-items: center;
    width: 13px;
    padding: 5px 0;
    background: #ececec;
}

.arrow {
    border: 4px solid transparent;
    border-top: 5px solid #666;
    border-bottom: 0;
}

.arrow.up {
    border-top: 0;
    border-bottom: 5px solid #666;
}

.track {
    display: flex;
    flex: 1;
    flex-direction: column;
    justify-content: flex-end;
    padding: 3px 0;
}

.thumb {
    width: 9px;
    height: 55%;
    background: #bfbfbf;
    border-radius: 4px;
}

.cloud-drop {
    position: absolute;
    right: -8px;
    top: 17px;
    display: flex;
    align-items: center;
    height: 38px;
    font-size: 13px;
    font-weight: bold;
    color: #0f95ff;
    background: #eff7ff;
    border: 1px solid #1492ff;
    border-radius: 6px;
}

.cloud-icon {
    display: flex;
    align-items: center;
    justify-content: center;
    width: 37px;
    height: 38px;
    background: linear-gradient(90deg, #22a8ff, #068cff);
    border-radius: 6px;
}

.cloud-icon svg {
    width: 22px;
    height: 22px;
}

.cloud-text {
    padding: 0 8px 0 6px;
}

/* Status bar */
.status {
    display: flex;
    height: 25px;
    flex: none;
    padding-top: 6px;
    background: var(--panel);
    border-top: 1px solid #cfcfcf;
    white-space: nowrap;
    line-height: 18px;
    overflow: hidden;
}

.status .cell {
    padding: 0 25px 0 17px;
    border-right: 1px solid #999;
}

.status .cell:first-child {
    padding-left: 10px;
}

.summary {
    display: flex;
    gap: 8px;
    margin-left: auto;
}

.view {
    display: flex;
    align-items: center;
    justify-content: center;
    width: 21px;
    height: 18px;
    margin-left: 14px;
    background: #fff;
    border: 1px solid #ccc;
    border-radius: 3px;
}

.view svg {
    width: 14px;
    height: 14px;
}

.view.plain {
    margin-left: 6px;
    background: none;
    border: none;
}

.sep {
    width: 1px;
    margin: 0 -4px 0 10px;
    background: #888;
}

.zoom {
    margin-left: 14px;
}

.minus {
    width: 12px;
    height: 2px;
    margin: 8px 8px 0 11px;
    background: #555;
}

.date-tip {
    width: 137px;
    height: 26px;
    flex: none;
    margin-top: 3px;
    padding: 0 5px;
    line-height: 16px;
    color: #444;
    background: #fff;
    border: 1px solid #777;
}
```
